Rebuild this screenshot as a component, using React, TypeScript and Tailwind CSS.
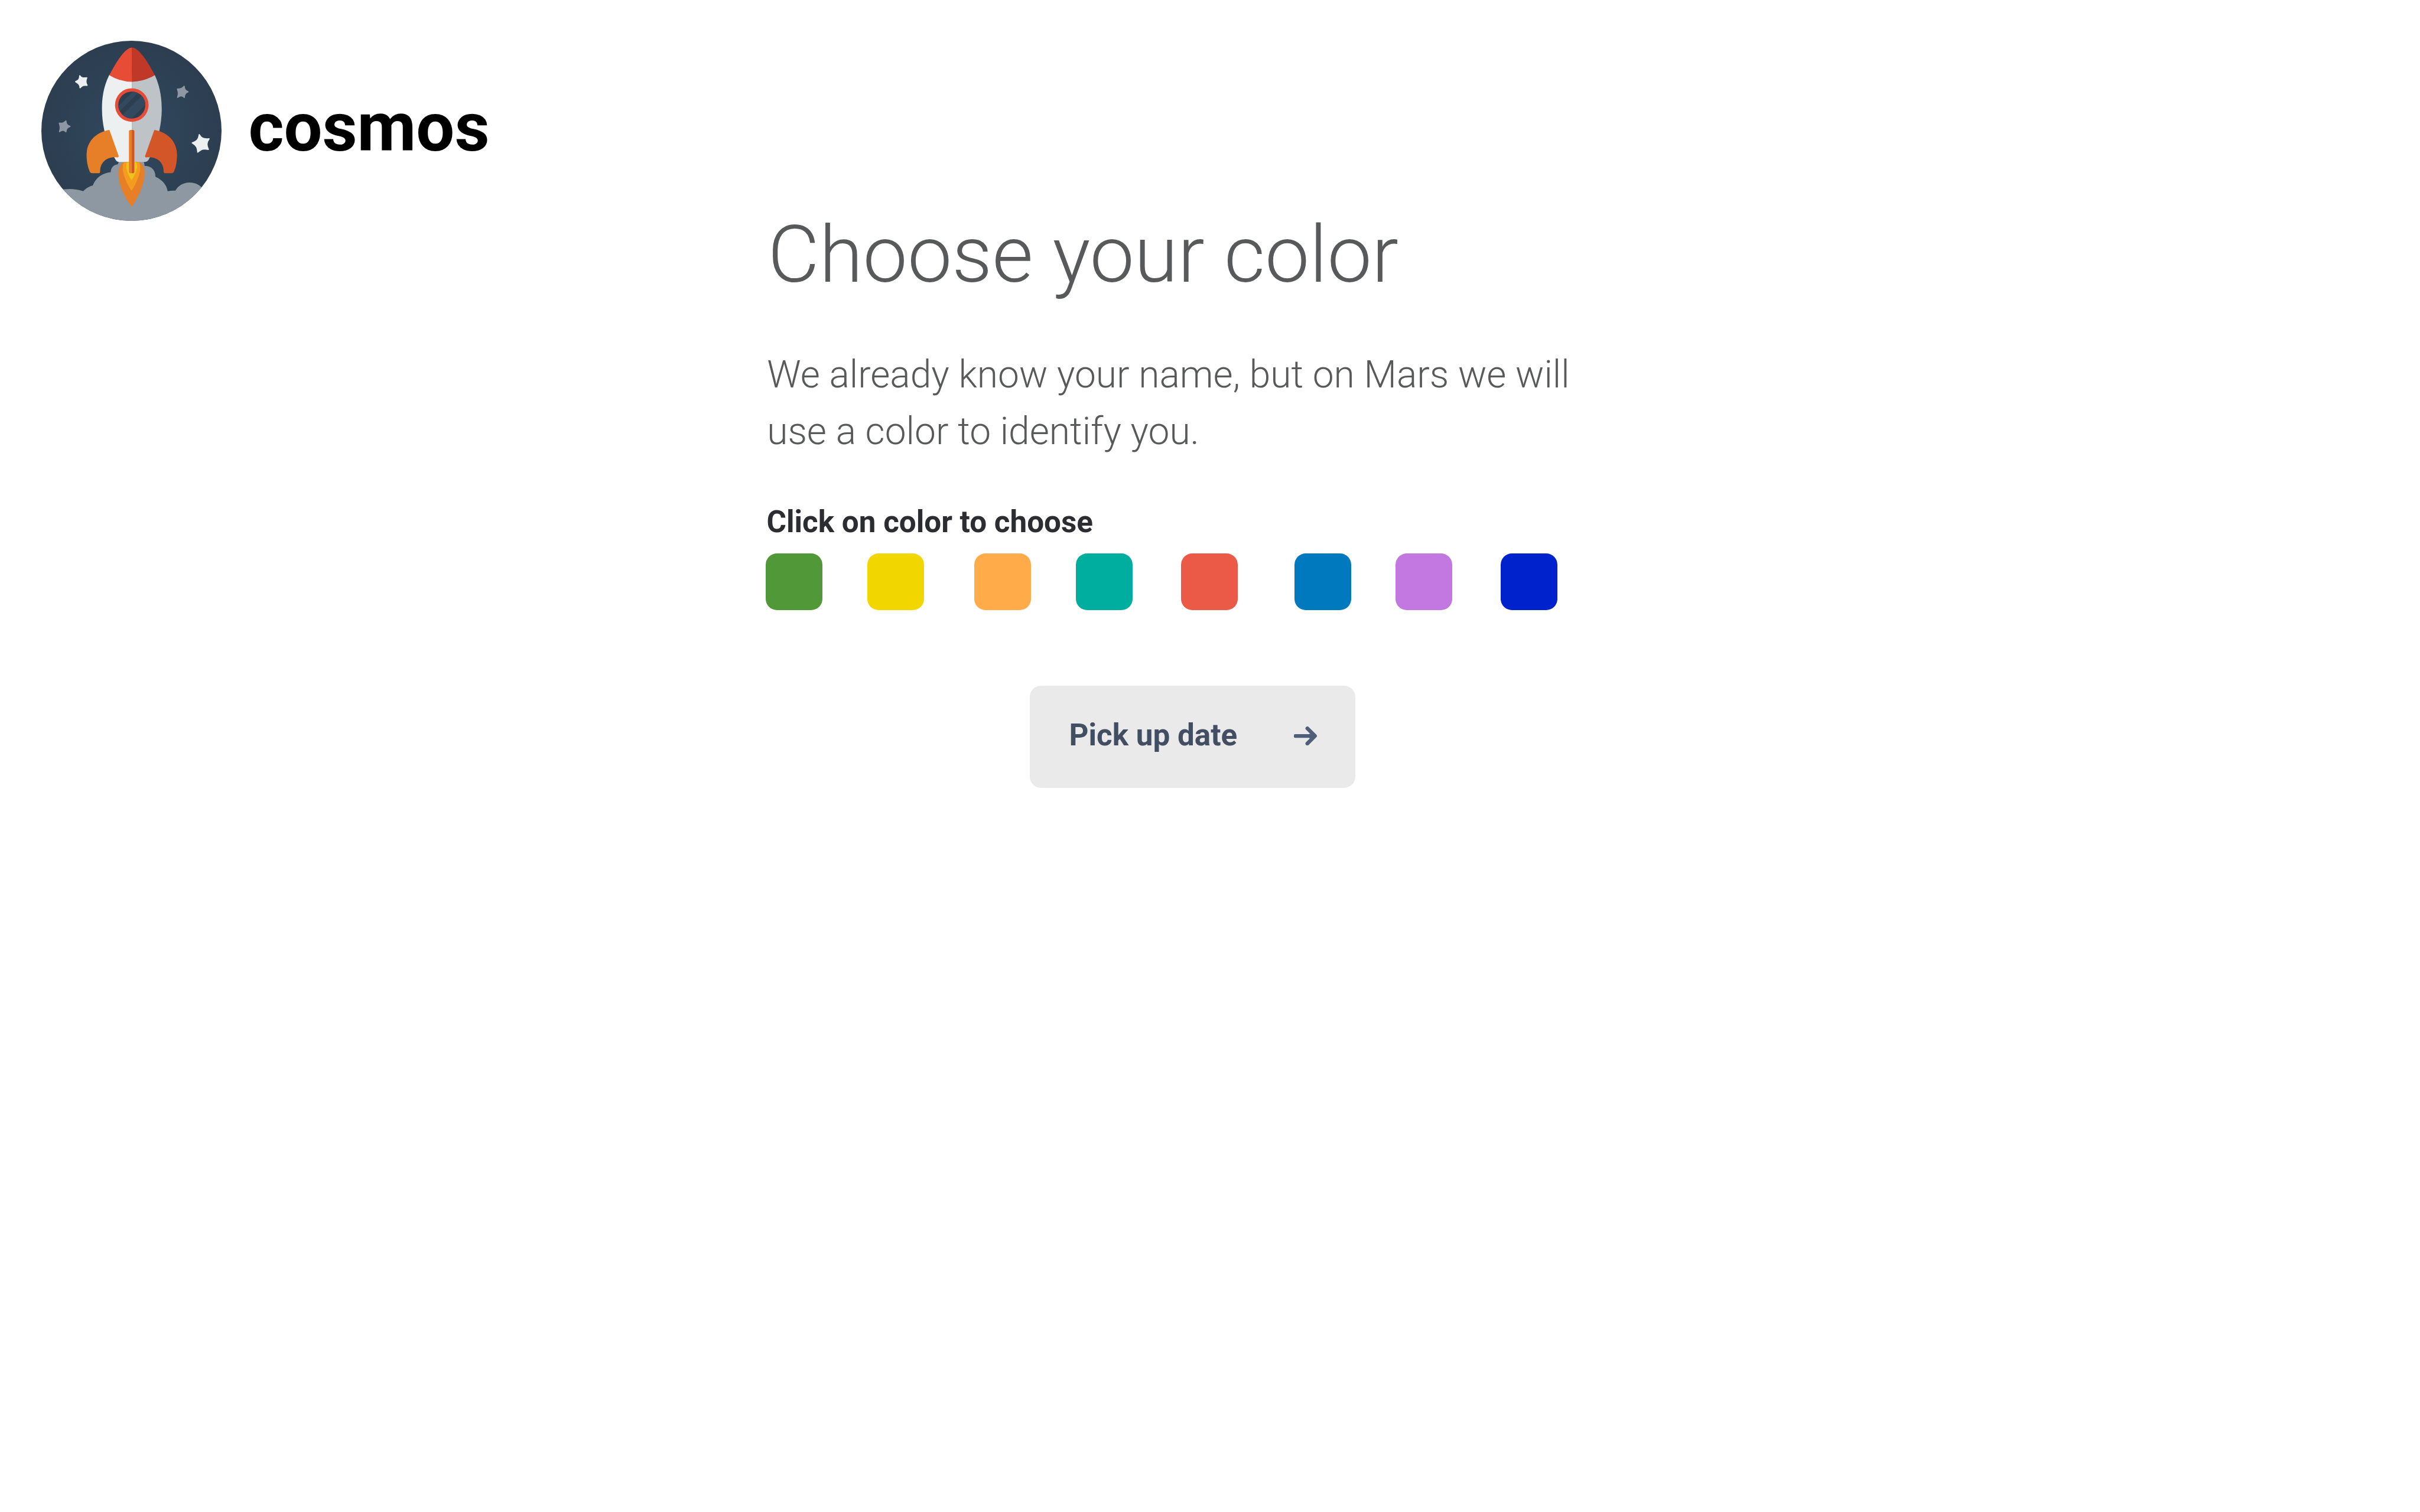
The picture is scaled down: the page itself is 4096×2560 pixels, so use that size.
const swatches = [
  { name: "green", className: "bg-[#519839]" },
  { name: "yellow", className: "bg-[#f2d600] ml-[75.5px]" },
  { name: "orange", className: "bg-[#ffab4a] ml-[85.5px]" },
  { name: "teal", className: "bg-[#00ae9f] ml-[75.5px]" },
  { name: "red", className: "bg-[#eb5a46] ml-[82px]" },
  { name: "blue", className: "bg-[#0079bf] ml-[96px]" },
  { name: "purple", className: "bg-[#c377e0] ml-[75.5px]" },
  { name: "navy", className: "bg-[#0022cc] ml-[82px]" },
];

function RocketLogo() {
  return (
    <svg className="block h-[305px] w-[305px]" viewBox="35 30.5 1191.5 1191.5" aria-hidden="true">
      <defs>
        <radialGradient id="sky">
          <stop offset="0" stopColor="#32495f" />
          <stop offset="1" stopColor="#2c3e50" />
        </radialGradient>
        <clipPath id="disc">
          <circle cx="630.7" cy="626.2" r="595.7" />
        </clipPath>
        <clipPath id="glass">
          <circle cx="633" cy="455.5" r="89.5" />
        </clipPath>
      </defs>
      <circle cx="630.7" cy="626.2" r="595.7" fill="url(#sky)" />
      <g clipPath="url(#disc)">
        <path
          fill="#8d98a2"
          d="M150 1020C200 1007 262 1008 311 1026Q338 998 375 988C394 938 440 904 494 900C494 872 512 850 540 848Q545 842 546 826H710Q717 842 718 859C754 856 790 880 789 930C835 950 864 985 870 1026Q895 1020 921 1022C955 958 1045 950 1096 1001L1240 1060V1240H30V1020Z"
        />
      </g>
      <g fill="#ecf0f1" stroke="#ecf0f1" strokeLinejoin="round" strokeWidth="8">
        <path d="M289 262C299 277 309 279 335 276C327 293 327 309 337 325C314 322 305 326 291 341C290 321 283 313 262 301C281 293 288 286 289 262Z" />
        <path d="M1079 652C1091 674 1104 683 1144 679C1126 704 1126 721 1139 749C1108 742 1092 747 1069 767C1068 739 1063 724 1033 706C1062 697 1076 684 1079 652Z" />
      </g>
      <g fill="#8d98a2" stroke="#8d98a2" strokeLinejoin="round" strokeWidth="8">
        <path d="M979 332C981 353 986 360 1005 368C985 376 982 384 980 405C966 392 956 391 936 404C943 387 943 370 935 350C957 352 967 346 979 332Z" />
        <path d="M197 561C199 581 204 589 224 597C204 605 200 613 197 632C184 620 174 619 155 631C162 614 162 596 154 576C175 579 185 575 197 561Z" />
      </g>
      <path fill="#ecf0f1" d="M484 257C440 345 435 430 436 490C437 590 465 720 526 818Q533 832 548 832H633V257Z" />
      <path fill="#bdc3c7" d="M785 257C826 345 831 430 831 490C830 590 801 720 744 818Q736 832 720 832H633V257Z" />
      <path fill="#e74c36" d="M484 258Q580 75 633 75V302Q550 300 484 258Z" />
      <path fill="#c03928" d="M785 258Q690 75 633 75V302Q716 300 785 258Z" />
      <circle cx="633" cy="455.5" r="111" fill="#e74c36" />
      <g clipPath="url(#glass)">
        <rect x="540" y="360" width="190" height="190" fill="#2c3e50" />
        <path fill="#34495e" d="M667 340H710L520 530V487ZM753 340L520 573H604L780 397V340Z" />
      </g>
      <path fill="#e67f27" d="M485 620L546 792Q547 802 538 802C470 793 424 834 424 890Q424 907 416 907H371Q359 907 354 894C340 860 334 825 334 785C335 695 395 636 485 620Z" />
      <path fill="#d25627" d="M782 620L721 792Q719 802 728 802C797 793 843 834 843 890Q843 907 851 907H894Q908 907 913 894C927 860 932 825 932 785C931 695 872 636 782 620Z" />
      <path fill="#e67f27" d="M580 833H683Q718 855 718 905C716 985 680 1058 631 1130C580 1055 544 985 544 905Q545 855 580 833Z" />
      <path fill="#f49c1f" d="M580 833H683Q691 858 689 882C683 925 662 975 631 1024C598 975 580 925 573 882Q571 855 580 833Z" />
      <path fill="#edc51a" d="M602 833H663Q670 850 668 870Q660 910 631 952Q604 912 597 870Q595 850 602 833Z" />
      <path fill="#e67f27" d="M633 620H625Q614 620 614 631V896Q614 907 625 907H633Z" />
      <path fill="#d25627" d="M633 620H640Q650 620 650 631V896Q650 907 640 907H633Z" />
    </svg>
  );
}

function ArrowRight() {
  return (
    <svg className="mb-[3px] block h-[32.2px] w-[39.2px]" viewBox="0 0 39.2 32.2" fill="none" aria-hidden="true">
      <rect x="0" y="13" width="34" height="6.2" rx="2" fill="#505f79" />
      <path
        d="M22.8 3.3L35.7 16.1L22.8 28.9"
        stroke="#505f79"
        strokeWidth="6.4"
        strokeLinecap="round"
        strokeLinejoin="round"
      />
      <path d="M26 12L35 16.1L26 20.2Z" fill="#505f79" />
    </svg>
  );
}

export default function App() {
  return (
    <div className="h-[2560px] w-[4096px] overflow-hidden bg-white font-['Roboto',sans-serif]">
      <header className="flex h-[374px] items-start pt-[69px] pl-[70.4px]">
        <RocketLogo />
        <span className="mt-[79px] ml-[45px] text-[115.2px] leading-[135px] font-bold text-black">cosmos</span>
      </header>
      <main className="ml-[1296px] w-[1440px]">
        <h1 className="-mt-[22px] pl-[3.5px] text-[134.4px] leading-[158px] font-light whitespace-nowrap text-[#58595a]">
          Choose your color
        </h1>
        <p className="mt-[77px] pl-[2.2px] text-[64px] leading-[96px] font-light tracking-[0.04px] whitespace-nowrap text-[#58595a]">
          We already know your name, but on Mars we will
          <br />
          use a color to identify you.
        </p>
        <h2 className="mt-[75px] pl-[1.5px] text-[51.2px] leading-[60px] font-bold text-[#2c2d31]">
          Click on color to choose
        </h2>
        <div className="mt-[23.2px] flex">
          {swatches.map((s) => (
            <button
              key={s.name}
              type="button"
              aria-label={s.name}
              className={`block h-[96px] w-[96px] shrink-0 rounded-[19.2px] ${s.className}`}
            />
          ))}
        </div>
        <button
          type="button"
          className="mt-[128px] ml-[446.8px] flex h-[173.3px] w-[551px] items-center justify-between rounded-[19.2px] bg-[#eaeaea] pr-[64.3px] pl-[66.7px]"
        >
          <span className="mb-[6px] text-[51.2px] leading-[60px] font-bold text-[#424f63]">Pick up date</span>
          <ArrowRight />
        </button>
      </main>
    </div>
  );
}
